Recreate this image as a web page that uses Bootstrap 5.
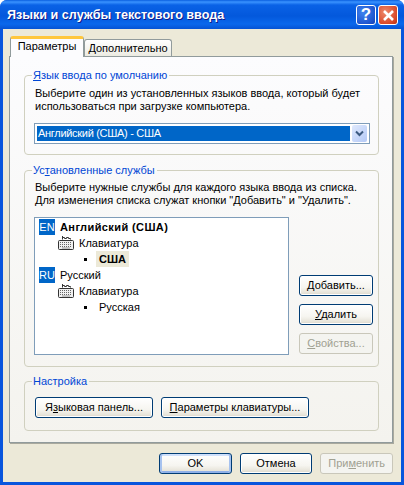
<!DOCTYPE html>
<html lang="ru">
<head>
    <meta charset="UTF-8">
    <meta name="viewport" content="width=device-width, initial-scale=1.0">
    <title>Языки и службы текстового ввода</title>
    <link rel="stylesheet" href="https://cdn.jsdelivr.net/npm/bootstrap@5.3.0/dist/css/bootstrap.min.css">
    <style>
        html, body { margin: 0; height: 485px; overflow: hidden; background: #fff; }
        body, button { font-family: "Liberation Sans", Arial, sans-serif; font-size: 11px; line-height: 13px; color: #000; }
        .xp-window { width: 404px; height: 485px; background: #0855dd; border-radius: 7px 7px 0 0; padding: 0 3px 3px; }
        .xp-title { height: 29px; margin: 0 -3px; padding: 1px 6px 0 7px; border-radius: 7px 7px 0 0;
            background: linear-gradient(180deg, #0a5fe0 0, #3a93ff 2px, #0a62e6 5px, #0358dc 16px, #0a68ec 24px, #0553d4 29px); }
        .xp-title-text { font-size: 12.6px; font-weight: 700; color: #fff; text-shadow: 1px 1px 0 #0f1a89; }
        .xp-cap { width: 20px; height: 20px; border: 1px solid #fff; border-radius: 3px; padding: 0; color: #fff; }
        .xp-help { background: radial-gradient(circle at 35% 35%, #3f84ef, #1f55cf 70%, #1540b5); font-size: 17px; font-weight: 700; line-height: 18px; margin-right: 2px; }
        .xp-close { background: radial-gradient(circle at 35% 35%, #ee8a6c, #d9492a 70%, #b8300f); }
        .xp-client { height: 453px; background: #ece9d8; padding: 7px 8px 0 6px; }
        .xp-tabs { height: 20px; padding-left: 1px; }
        .xp-tab { height: 17px; margin-top: 3px; width: 88px; padding-top: 2px; text-align: center; background: linear-gradient(180deg, #fff, #ecebe2); border: 1px solid #919b9c; border-bottom: 0; border-radius: 3px 3px 0 0; }
        .xp-tab-on { height: 21px; margin-top: 0; width: 74px; padding-top: 1px; background: #fcfcfe; border-top: 3px solid #ffc73c; position: relative; z-index: 1; }
        .xp-panel { height: 387px; background: linear-gradient(180deg, #fcfcfe, #f4f3ee); border: 1px solid #919b9c; box-shadow: 1px 1px 0 #a9a99e; padding: 12px 13px 0 14px; }
        .xp-group { border: 1px solid #d0d0bf; border-radius: 4px; margin: 0; padding: 0 10px; white-space: nowrap; }
        .xp-group legend { float: none; width: auto; margin: 0 0 0 -3px; padding: 0 2px 0 1px; font-size: 11px; line-height: 13px; color: #0046d5; }
        .xp-lang { height: 86px; }
        .xp-services { height: 203px; margin-top: 9px; }
        .xp-settings { height: 56px; margin-top: 8px; }
        .xp-copy { margin-top: 5px; }
        .xp-services .xp-copy { margin-top: 4px; }
        .xp-combo { height: 21px; margin: 10px 0 0 -1px; width: 336px; border: 1px solid #7f9db9; background: #fff; padding: 2px; gap: 2px; }
        .xp-combo-val { background: #0066c8; color: #fff; flex: 1; height: 15px; padding: 1px 1px 0; letter-spacing: -.3px; }
        .xp-combo-btn { width: 15px; height: 17px; margin-top: -1px; border-radius: 2px; background: linear-gradient(135deg, #dfe9fd, #b4c9f6); }
        .xp-tree { width: 255px; height: 138px; margin: 10px 0 0 -1px; border: 1px solid #7f9db9; background: #fff; padding: 1px 0 0 4px; flex-shrink: 0; }
        .xp-row { height: 16px; }
        .xp-row b { letter-spacing: .4px; }
        .xp-lng { width: 16px; height: 16px; background: #0066c8; color: #fff; line-height: 16px; text-align: center; margin-right: 5px; }
        .xp-sub { padding-left: 19px; }
        .xp-sub svg { margin-right: 5px; }
        .xp-leaf { padding-left: 45px; }
        .xp-dot { width: 3px; height: 3px; background: #000; margin-right: 9px; }
        .xp-leaf-text { padding: 0 3px; height: 16px; line-height: 16px; }
        .xp-leaf-sel { background: #ece9d8; font-weight: 700; }
        .xp-side { margin: 68px 0 0 10px; width: 74px; gap: 8px; flex-shrink: 0; }
        .xp-btn { height: 21px; padding: 0; border: 1px solid #003c74; border-radius: 3px; color: #000; background: linear-gradient(180deg, #fff 0, #f6f5f0 60%, #e6e3d8 90%, #d6d0c5 100%); box-shadow: inset 0 0 0 1px #fff; }
        .xp-btn:disabled { border-color: #c9c7ba; color: #a1a192; background: #f4f4f0; box-shadow: none; opacity: 1; }
        .xp-btn-def { box-shadow: inset 2px 0 0 #a6c2ef, inset -2px 0 0 #a6c2ef, inset 0 2px 0 #cfe0fb, inset 0 -2px 0 #8fb0e8; }
        .xp-btn-s { width: 74px; }
        .xp-btn-lg { width: 73px; }
        .xp-btn-bar { width: 118px; }
        .xp-btn-kb { width: 148px; }
        .xp-setrow { gap: 8px; margin-top: 9px; }
        .xp-footer { gap: 8px; margin-top: 10px; padding-left: 150px; }
    </style>
</head>
<body>
    <div class="xp-window d-flex flex-column">
        <div class="xp-title d-flex align-items-center">
            <div class="xp-title-text flex-grow-1">Языки и службы текстового ввода</div>
            <button class="xp-cap xp-help">?</button>
            <button class="xp-cap xp-close d-flex align-items-center justify-content-center">
                <svg width="13" height="13" viewBox="0 0 13 13"><path d="M2 2 11 11M11 2 2 11" stroke="#fff" stroke-width="2.6"/></svg>
            </button>
        </div>
        <div class="xp-client">
            <div class="xp-tabs d-flex">
                <div class="xp-tab xp-tab-on">Параметры</div>
                <div class="xp-tab">Дополнительно</div>
            </div>
            <div class="xp-panel">
                <fieldset class="xp-group xp-lang">
                    <legend><u>Я</u>зык ввода по умолчанию</legend>
                    <div class="xp-copy">Выберите один из установленных языков ввода, который будет<br>использоваться при загрузке компьютера.</div>
                    <div class="xp-combo d-flex">
                        <div class="xp-combo-val">Английский (США) - США</div>
                        <div class="xp-combo-btn d-flex align-items-center justify-content-center">
                            <svg width="9" height="7" viewBox="0 0 9 7"><path d="M1 1.5 4.5 5 8 1.5" fill="none" stroke="#3c5a80" stroke-width="2"/></svg>
                        </div>
                    </div>
                </fieldset>
                <fieldset class="xp-group xp-services">
                    <legend>Ус<u>т</u>ановленные службы</legend>
                    <div class="xp-copy">Выберите нужные службы для каждого языка ввода из списка.<br>Для изменения списка служат кнопки "Добавить" и "Удалить".</div>
                    <div class="d-flex">
                        <div class="xp-tree">
                            <div class="xp-row d-flex align-items-center"><div class="xp-lng">EN</div><b>Английский (США)</b></div>
                            <div class="xp-row xp-sub d-flex align-items-center">
                                <svg width="16" height="14" viewBox="0 0 16 14"><path d="M4.5 0V3.5M4.5 1.5H6.5V2.5H8.5V1.5H10.5V2.5H12.5V3.5" fill="none" stroke="#333"/><rect x=".5" y="4.5" width="15" height="9" rx="1" fill="#f0f0f0" stroke="#333"/><path d="M2 6.5H14M2 8.5H14M2 10.5H14" stroke="#666" stroke-dasharray="1 1"/><path d="M4 12H12" stroke="#999"/></svg>
                                Клавиатура
                            </div>
                            <div class="xp-row xp-leaf d-flex align-items-center"><span class="xp-dot"></span><span class="xp-leaf-text xp-leaf-sel">США</span></div>
                            <div class="xp-row d-flex align-items-center"><div class="xp-lng">RU</div><span>Русский</span></div>
                            <div class="xp-row xp-sub d-flex align-items-center">
                                <svg width="16" height="14" viewBox="0 0 16 14"><path d="M4.5 0V3.5M4.5 1.5H6.5V2.5H8.5V1.5H10.5V2.5H12.5V3.5" fill="none" stroke="#333"/><rect x=".5" y="4.5" width="15" height="9" rx="1" fill="#f0f0f0" stroke="#333"/><path d="M2 6.5H14M2 8.5H14M2 10.5H14" stroke="#666" stroke-dasharray="1 1"/><path d="M4 12H12" stroke="#999"/></svg>
                                Клавиатура
                            </div>
                            <div class="xp-row xp-leaf d-flex align-items-center"><span class="xp-dot"></span><span class="xp-leaf-text">Русская</span></div>
                        </div>
                        <div class="xp-side d-flex flex-column">
                            <button class="xp-btn xp-btn-s"><u>Д</u>обавить...</button>
                            <button class="xp-btn xp-btn-s"><u>У</u>далить</button>
                            <button class="xp-btn xp-btn-s" disabled><u>С</u>войства...</button>
                        </div>
                    </div>
                </fieldset>
                <fieldset class="xp-group xp-settings">
                    <legend>Настройка</legend>
                    <div class="xp-setrow d-flex">
                        <button class="xp-btn xp-btn-bar">Я<u>з</u>ыковая панель...</button>
                        <button class="xp-btn xp-btn-kb"><u>П</u>араметры клавиатуры...</button>
                    </div>
                </fieldset>
            </div>
            <div class="xp-footer d-flex">
                <button class="xp-btn xp-btn-lg xp-btn-def">OK</button>
                <button class="xp-btn xp-btn-lg">Отмена</button>
                <button class="xp-btn xp-btn-lg" disabled>При<u>м</u>енить</button>
            </div>
        </div>
    </div>
</body>
</html>
